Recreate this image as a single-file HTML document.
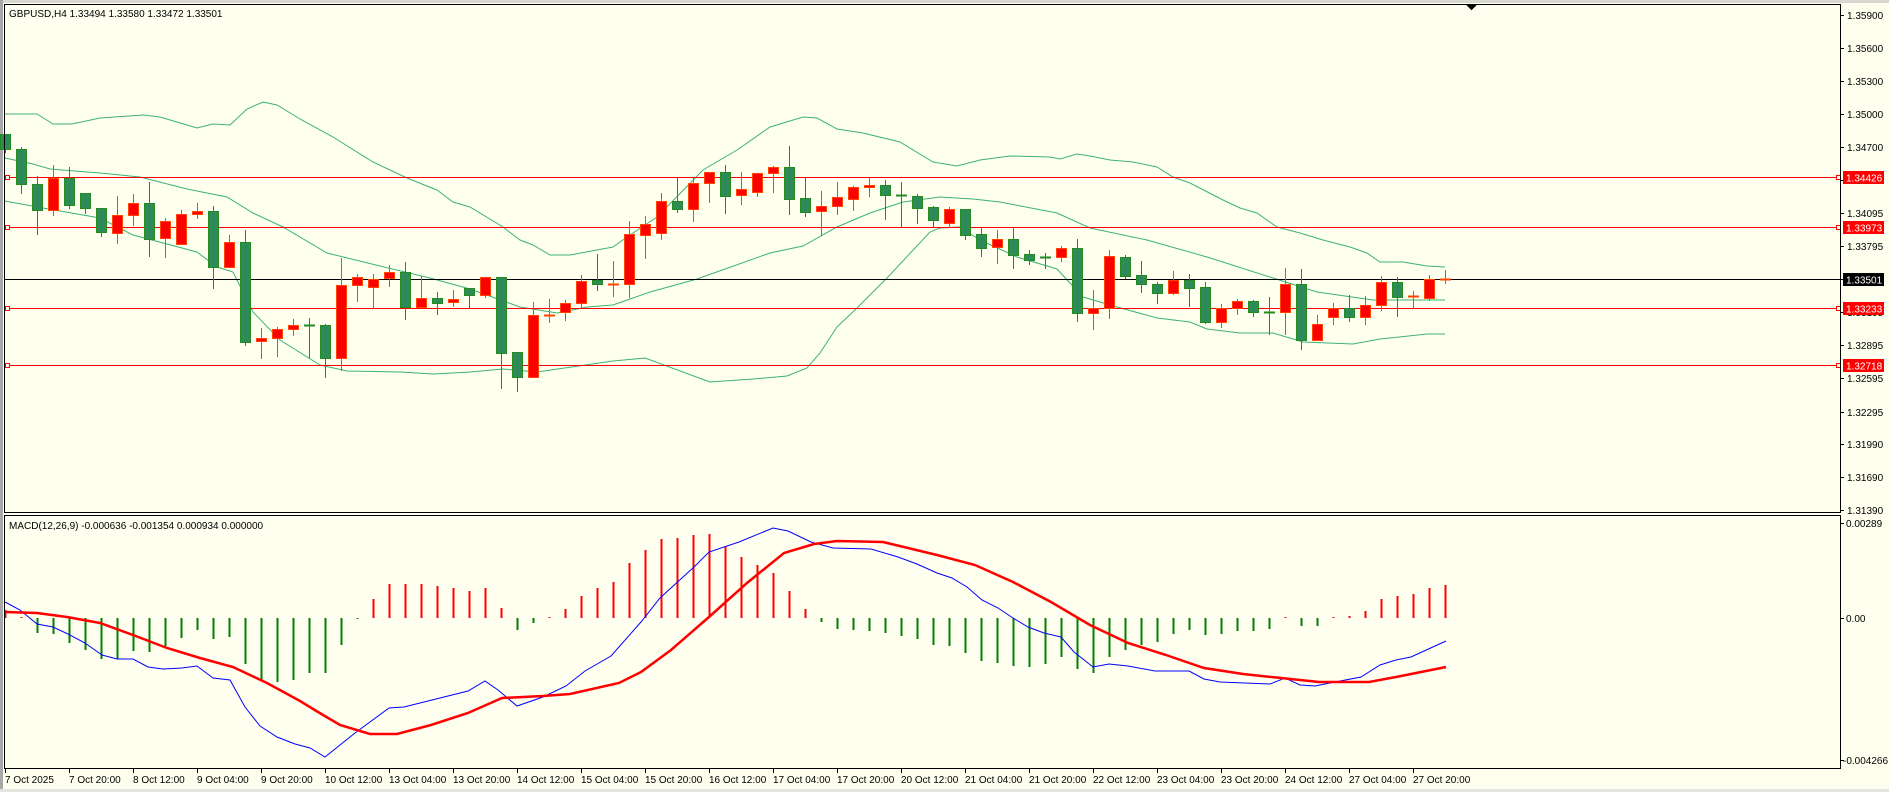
<!DOCTYPE html>
<html><head><meta charset="utf-8">
<style>
html,body{margin:0;padding:0;background:#fffff0;width:1889px;height:792px;overflow:hidden}
svg{display:block}
text{font-family:"Liberation Sans",sans-serif;font-size:10px;fill:#000}
</style></head>
<body>
<svg id="s" width="1889" height="792" viewBox="0 0 1889 792" xmlns="http://www.w3.org/2000/svg" shape-rendering="crispEdges">
<rect x="0" y="0" width="1889" height="792" fill="#fffff0"/>
<rect x="0" y="0" width="1889" height="3" fill="#d8d8d0"/>
<rect x="0" y="0" width="3" height="792" fill="#a8a8a8"/>
<rect x="0" y="789" width="1889" height="3" fill="#e4e4e0"/>
<g id="bands" fill="none" stroke="#3cb371" stroke-width="1" shape-rendering="auto">
<polyline points="5,114 37,114 53,124 72,124 100,118 143,115 160,117 197,128 213,124 230,125 247,109 263,102 277,105 300,119 333,137 373,162 407,178 437,190 453,202 470,207 503,227 520,240 533,245 550,255 570,255 613,247 630,235 657,217 703,170 737,150 770,127 803,117 817,118 837,129 863,133 900,142 933,162 957,166 980,160 1010,156 1050,157 1060,159 1077,154 1090,156 1110,160 1133,162 1157,167 1173,177 1190,183 1223,200 1240,208 1257,213 1277,227 1300,233 1323,240 1350,247 1367,253 1380,262 1403,262 1427,266 1445,267"/>
<polyline points="5,158 33,164 50,169 100,173 140,177 187,189 227,197 253,213 283,227 327,253 380,266 430,278 470,289 520,307 557,313 587,307 613,305 650,292 697,279 770,253 803,246 837,227 870,213 903,202 940,197 973,199 1000,202 1057,213 1090,228 1147,240 1207,257 1273,278 1317,292 1373,300 1445,300"/>
<polyline points="5,201 43,208 100,218 133,235 197,252 217,267 233,272 253,312 280,340 320,365 347,371 400,372 433,374 470,372 503,369 537,372 613,361 645,358 710,382 753,379 787,376 807,368 820,353 837,327 857,308 887,278 930,232 940,228 960,227 980,240 1017,257 1057,269 1083,297 1117,307 1157,318 1190,322 1207,329 1240,333 1273,333 1303,342 1353,344 1380,339 1427,334 1445,334"/>
</g>
<g id="levels">
<line x1="4" y1="177.5" x2="1841" y2="177.5" stroke="#ff0000"/>
<line x1="4" y1="227.5" x2="1841" y2="227.5" stroke="#ff0000"/>
<line x1="4" y1="279.5" x2="1841" y2="279.5" stroke="#000"/>
<line x1="4" y1="308.5" x2="1841" y2="308.5" stroke="#ff0000"/>
<line x1="4" y1="365.5" x2="1841" y2="365.5" stroke="#ff0000"/>
<rect x="5.5" y="175.5" width="4" height="4" fill="#fffff0" stroke="#ff0000"/>
<rect x="5.5" y="225.5" width="4" height="4" fill="#fffff0" stroke="#ff0000"/>
<rect x="5.5" y="306.5" width="4" height="4" fill="#fffff0" stroke="#ff0000"/>
<rect x="5.5" y="363.5" width="4" height="4" fill="#fffff0" stroke="#ff0000"/>
<rect x="1836.5" y="175.5" width="4" height="4" fill="#fffff0" stroke="#ff0000"/>
<rect x="1836.5" y="225.5" width="4" height="4" fill="#fffff0" stroke="#ff0000"/>
<rect x="1836.5" y="306.5" width="4" height="4" fill="#fffff0" stroke="#ff0000"/>
<rect x="1836.5" y="363.5" width="4" height="4" fill="#fffff0" stroke="#ff0000"/>
</g>
<g id="candles"></g>
<g id="hist"></g>
<g fill="none" shape-rendering="auto">
<polyline stroke="#0000ff" stroke-width="1" points="5,602 20,610 37,624 53,627 68,634 85,643 102,655 117,659 133,659 148,667 163,669 182,668 197,666 213,678 230,680 245,707 260,726 277,737 295,744 310,748 325,757 355,733 389,708 404,707 468,691 485,681 498,690 517,706 543,697 566,686 585,671 611,656 641,622 660,598 694,567 709,552 739,542 773,528 788,531 811,542 833,548 871,549 898,557 917,564 937,573 952,578 967,587 982,600 998,608 1013,618 1028,627 1044,633 1061,637 1074,652 1093,667 1109,664 1128,666 1155,671 1189,671 1204,679 1220,682 1270,684 1285,678 1300,685 1315,686 1335,682 1361,677 1380,665 1396,660 1411,657 1446,641"/>
<polyline stroke="#ff0000" stroke-width="2.5" points="5,612 37,613 67,617 100,623 133,635 167,648 200,658 233,667 267,683 300,701 318,712 340,725 370,734 397,734 431,725 468,713 502,698 543,696 570,694 619,683 641,672 671,650 709,617 747,583 784,553 814,544 837,541 883,542 937,555 975,565 1013,582 1051,602 1090,625 1128,643 1166,655 1204,668 1243,674 1281,678 1319,682 1369,682 1396,677 1446,667"/>
</g>
<g id="frame" fill="none" stroke="#000">
<rect x="4.5" y="4.5" width="1836" height="508"/>
<rect x="4.5" y="515.5" width="1836" height="253"/>
</g>
<polygon points="1466,5 1477,5 1471.5,10" fill="#000"/>
<g id="ticks" stroke="#000"></g>
<g>
<text x="1847" y="19">1.35900</text>
<text x="1847" y="52">1.35600</text>
<text x="1847" y="85">1.35300</text>
<text x="1847" y="118">1.35000</text>
<text x="1847" y="151">1.34700</text>
<text x="1847" y="184">1.34400</text>
<text x="1847" y="217">1.34095</text>
<text x="1847" y="250">1.33795</text>
<text x="1847" y="316">1.33195</text>
<text x="1847" y="349">1.32895</text>
<text x="1847" y="382">1.32595</text>
<text x="1847" y="416">1.32295</text>
<text x="1847" y="448">1.31990</text>
<text x="1847" y="481">1.31690</text>
<text x="1847" y="514">1.31390</text>
<rect x="1843" y="171" width="41" height="13" fill="#ff0000"/>
<text x="1846" y="181.5" style="fill:#fff">1.34426</text>
<rect x="1843" y="221" width="41" height="13" fill="#ff0000"/>
<text x="1846" y="231.5" style="fill:#fff">1.33973</text>
<rect x="1843" y="273" width="41" height="13" fill="#000"/>
<text x="1846" y="283.5" style="fill:#fff">1.33501</text>
<rect x="1843" y="302" width="41" height="13" fill="#ff0000"/>
<text x="1846" y="312.5" style="fill:#fff">1.33233</text>
<rect x="1843" y="359" width="41" height="13" fill="#ff0000"/>
<text x="1846" y="369.5" style="fill:#fff">1.32718</text>
<text x="1846" y="527">0.00289</text>
<text x="1846" y="622">0.00</text>
<text x="1843" y="764">-0.004266</text>
</g>
<text x="9" y="17">GBPUSD,H4  1.33494 1.33580 1.33472 1.33501</text>
<text x="9" y="529">MACD(12,26,9) -0.000636 -0.001354 0.000934 0.000000</text>
<g id="dates">
<text x="5" y="783">7 Oct 2025</text>
<text x="69" y="783">7 Oct 20:00</text>
<text x="133" y="783">8 Oct 12:00</text>
<text x="197" y="783">9 Oct 04:00</text>
<text x="261" y="783">9 Oct 20:00</text>
<text x="325" y="783">10 Oct 12:00</text>
<text x="389" y="783">13 Oct 04:00</text>
<text x="453" y="783">13 Oct 20:00</text>
<text x="517" y="783">14 Oct 12:00</text>
<text x="581" y="783">15 Oct 04:00</text>
<text x="645" y="783">15 Oct 20:00</text>
<text x="709" y="783">16 Oct 12:00</text>
<text x="773" y="783">17 Oct 04:00</text>
<text x="837" y="783">17 Oct 20:00</text>
<text x="901" y="783">20 Oct 12:00</text>
<text x="965" y="783">21 Oct 04:00</text>
<text x="1029" y="783">21 Oct 20:00</text>
<text x="1093" y="783">22 Oct 12:00</text>
<text x="1157" y="783">23 Oct 04:00</text>
<text x="1221" y="783">23 Oct 20:00</text>
<text x="1285" y="783">24 Oct 12:00</text>
<text x="1349" y="783">27 Oct 04:00</text>
<text x="1413" y="783">27 Oct 20:00</text>
</g>
</svg>
<script>
(function(){
var NS="http://www.w3.org/2000/svg";
function el(n,a,p){var e=document.createElementNS(NS,n);for(var k in a)e.setAttribute(k,a[k]);p.appendChild(e);return e;}
var C=[
"G 134 149 134 152","G 149 184 147 193","G 184 210 176 234","R 178 210 165 215","G 178 205 167 208","G 193 208 193 213","G 208 232 208 236","R 215 233 196 243","R 203 215 194 225","G 203 239 182 256",
"R 221 238 218 257","R 214 244 210 244","R 211 214 203 218","G 211 267 206 288","R 242 267 235 267","G 242 342 230 345","R 338 341 328 358","R 329 338 327 356","R 325 329 319 335","G 325 325 318 357",
"G 325 358 324 377","R 285 358 258 370","R 277 285 274 301","R 279 287 274 308","R 272 278 265 286","G 272 307 262 319","R 298 307 276 308","G 298 303 292 314","R 299 302 290 306","G 288 295 288 308",
"R 277 295 277 297","G 277 353 277 388","G 352 377 352 391","R 315 377 302 377","R 315 315 299 322","R 303 312 300 320","R 281 303 275 307","G 280 284 254 290","R 284 284 261 296","R 234 284 221 297",
"R 224 235 216 258","R 201 233 193 239","G 201 209 178 212","R 183 209 178 221","R 172 183 172 202","G 172 196 165 213","R 189 195 172 204","R 173 192 173 196","R 167 173 166 192","G 167 199 146 214",
"G 198 212 178 216","R 206 211 191 235","R 197 206 182 214","R 187 199 186 210","R 185 187 178 196","G 185 195 180 219","G 195 195 182 226","G 196 208 194 223","G 207 220 206 226","R 209 223 207 227",
"G 209 235 209 239","G 234 248 228 256","R 239 247 230 263","G 239 255 228 268","G 254 260 250 264","G 257 257 253 268","R 248 257 246 261","G 248 313 239 321","R 308 313 290 329","R 256 308 250 318",
"G 257 276 255 278","G 275 284 261 292","G 284 293 282 303","R 280 293 271 294","G 280 288 274 306","G 287 322 282 323","R 308 322 304 327","R 301 308 299 314","G 301 312 300 316","G 312 312 297 334",
"R 284 312 268 334","G 284 340 269 349","R 324 340 315 340","R 308 317 303 324","G 308 317 295 321","R 305 317 296 324","R 282 305 276 310","G 282 297 277 316","R 296 296 291 308","R 279 298 275 300",
"R 279 279 270 283"];
var g=document.getElementById("candles");
C.forEach(function(s,k){
 var p=s.split(" "),t=p[0],o=+p[1],c=+p[2],h=+p[3],l=+p[4];
 var x=5+16*k;
 var stroke=t=="G"?"#228b22":"#ff4500", fill=t=="G"?"#2e8b57":"#ff0000";
 el("line",{x1:x+0.5,y1:h,x2:x+0.5,y2:l+1,stroke:stroke},g);
 if(c-o<1){ el("line",{x1:x-5,y1:o+0.5,x2:x+6,y2:o+0.5,stroke:stroke,"stroke-width":2},g); }
 else { el("rect",{x:x-4.5,y:o+0.5,width:10,height:c-o,fill:fill,stroke:stroke},g); }
});
var H=[610,617,633,634,643,650,659,659,651,652,646,638,630,639,637,664,680,682,680,673,673,645,619,599,584,584,584,586,588,591,588,608,630,623,617,609,596,588,582,563,550,539,538,535,534,546,557,565,573,591,609,622,629,630,631,633,636,639,645,646,653,661,663,666,667,664,657,669,673,657,650,645,642,634,630,635,634,631,631,629,617,626,626,618,616,611,599,596,594,588,585];
var hg=document.getElementById("hist");
H.forEach(function(v,k){
 var x=5+16*k;
 if(v>618) el("rect",{x:x-0.5,y:618,width:2,height:v-618,fill:"#008000"},hg);
 else if(v<618) el("rect",{x:x-0.5,y:v,width:2,height:618-v,fill:"#ff0000"},hg);
 else el("rect",{x:x-0.5,y:617,width:2,height:1,fill:"#ff0000"},hg);
});
var tg=document.getElementById("ticks");
[15,48,81,114,147,180,213,246,279,312,345,378,412,444,477,510,523,618,760].forEach(function(y){el("line",{x1:1841,y1:y+0.5,x2:1844,y2:y+0.5},tg);});
for(var i=0;i<23;i++){var x=5+64*i;el("line",{x1:x+0.5,y1:769,x2:x+0.5,y2:773},tg);}
})();
</script>
</body></html>
